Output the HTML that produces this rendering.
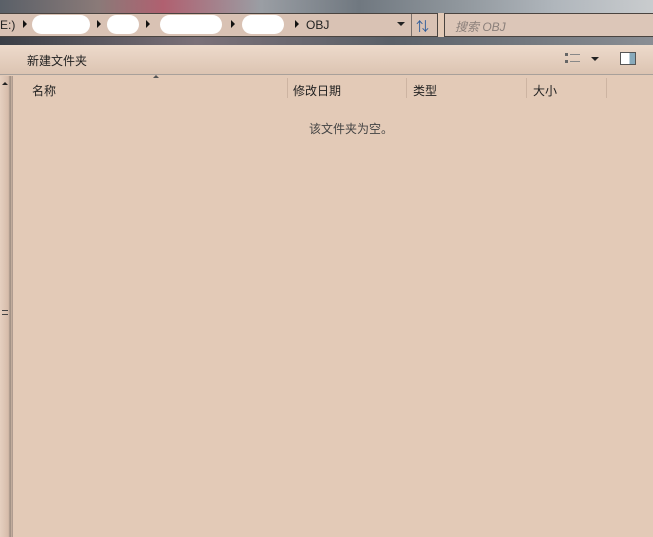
<!DOCTYPE html><html><head><meta charset="utf-8"><style>
body{margin:0;width:653px;height:537px;overflow:hidden;background:#e3cab7;font-family:"Liberation Sans","Noto Sans CJK SC",sans-serif;font-size:12px;color:#222;position:relative}
div{position:absolute;box-sizing:border-box}
.ov{background:#fff;border-radius:12px;top:15px;height:19px}
.tri{width:0;height:0;border-top:4px solid transparent;border-bottom:4px solid transparent;border-left:4px solid #111;top:20px}
.sep{top:78px;width:1px;height:20px;background:#cdb4a2}
</style></head><body>
<div style="left:0;top:0;width:653px;height:13px;background:linear-gradient(90deg,#5a6068 0%,#8a7a78 15%,#b06070 25%,#9a9ea4 40%,#707880 55%,#8f969c 70%,#b0b6bc 85%,#c9ccce 100%)"></div>
<div style="left:0;top:13px;width:438px;height:24px;background:#d9c2b4;border:1px solid #4a4440;border-left:none"></div>
<div style="left:0;top:18px;font-size:12px">E:)</div>
<div class="tri" style="left:23px"></div>
<div class="ov" style="left:32px;width:58px"></div>
<div class="tri" style="left:97px"></div>
<div class="ov" style="left:107px;width:32px"></div>
<div class="tri" style="left:146px"></div>
<div class="ov" style="left:160px;width:62px"></div>
<div class="tri" style="left:231px"></div>
<div class="ov" style="left:242px;width:42px"></div>
<div class="tri" style="left:295px"></div>
<div style="left:306px;top:18px">OBJ</div>
<div style="left:397px;top:22px;border-left:4px solid transparent;border-right:4px solid transparent;border-top:4px solid #222"></div>
<div style="left:411px;top:14px;width:1px;height:22px;background:#7a706a"></div>
<div style="left:416px;top:16px;font-size:13px;color:#2a5a9a">⇅</div>
<div style="left:444px;top:13px;width:209px;height:24px;background:#dcc6b8;border:1px solid #4a4440;border-right:none"></div>
<div style="left:455px;top:18px;color:#8a7f7a;font-style:italic">搜索 OBJ</div>
<div style="left:0;top:37px;width:653px;height:8px;background:linear-gradient(90deg,#3a3e46,#7a7078 30%,#5a6068 60%,#8a8e94)"></div>
<div style="left:0;top:45px;width:653px;height:30px;background:linear-gradient(#eddacb,#dcc4b2);border-bottom:1px solid #a8a09a"></div>
<div style="left:27px;top:52px;font-size:12px">新建文件夹</div>
<div style="left:565px;top:53px;width:16px;height:10px;border-left:3px dotted #666;"></div>
<div style="left:570px;top:54px;width:10px;height:8px;border-top:1px solid #888;border-bottom:1px solid #888"></div>
<div style="left:591px;top:57px;border-left:4px solid transparent;border-right:4px solid transparent;border-top:4px solid #222"></div>
<div style="left:620px;top:52px;width:16px;height:13px;border:1px solid #555;background:linear-gradient(90deg,#fff 60%,#8ab 60%)"></div>
<div style="left:0;top:76px;width:12px;height:461px;background:linear-gradient(90deg,#e6d0c0,#d6bcaa 70%,#9a8a80 85%,#d0b8a6)"></div>
<div style="left:2px;top:82px;border-left:3px solid transparent;border-right:3px solid transparent;border-bottom:3px solid #222"></div>
<div style="left:2px;top:310px;width:6px;height:5px;border-top:1px solid #444;border-bottom:1px solid #444"></div>
<div style="left:12px;top:76px;width:1px;height:461px;background:#b09c90"></div>
<div style="left:153px;top:75px;border-left:3px solid transparent;border-right:3px solid transparent;border-bottom:3px solid #555"></div>
<div style="left:32px;top:82px">名称</div>
<div class="sep" style="left:287px"></div>
<div style="left:293px;top:82px">修改日期</div>
<div class="sep" style="left:406px"></div>
<div style="left:413px;top:82px">类型</div>
<div class="sep" style="left:526px"></div>
<div style="left:533px;top:82px">大小</div>
<div class="sep" style="left:606px"></div>
<div style="left:309px;top:120px;color:#444">该文件夹为空。</div>
</body></html>
